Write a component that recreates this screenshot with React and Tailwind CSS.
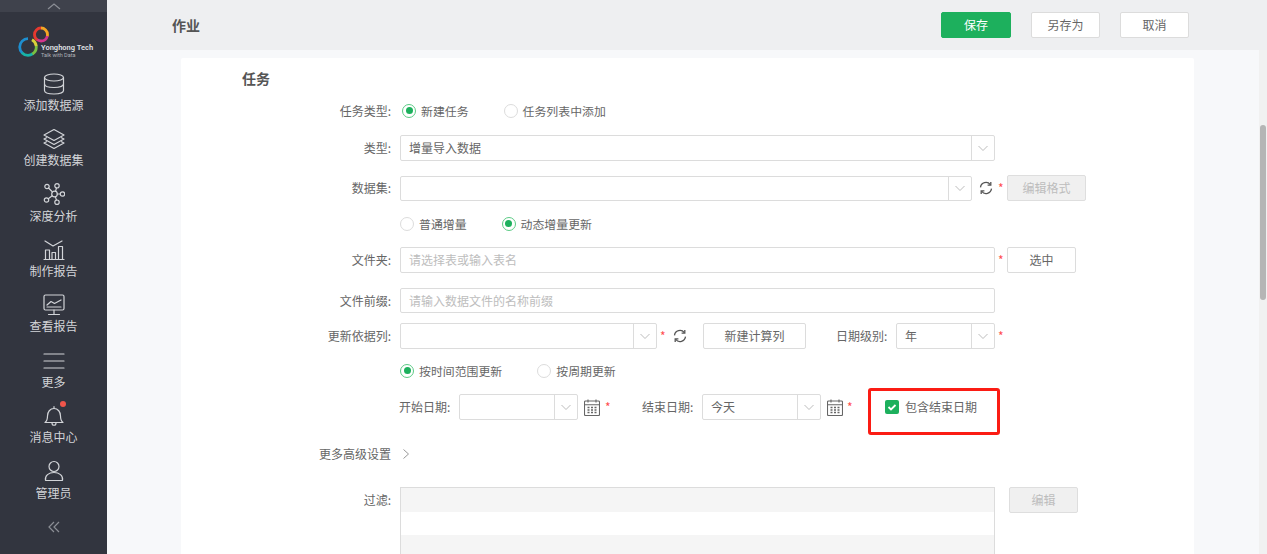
import React from "react";

const Star = ({ className = "" }) => (
  <span className={`text-[#ff4d4f] text-[12px] leading-none w-[6px] ${className}`}>*</span>
);

const Chevron = () => (
  <svg width="12" height="12" viewBox="0 0 12 12" fill="none" stroke="#bdbdbd" strokeWidth="1">
    <path d="M1.500 4l4.500 4.500L10.500 4" />
  </svg>
);

const Select = ({ w, h = "h-[26px]", value }) => (
  <div className={`${w} ${h} flex items-stretch shrink-0 bg-white border border-[#dcdcdc] rounded-[2px]`}>
    <div className="flex-1 flex items-center pl-[8px] text-[12px] text-[#666666]">{value}</div>
    <div className="w-[23px] border-l border-[#dcdcdc] flex items-center justify-center">
      <Chevron />
    </div>
  </div>
);

const Radio = ({ on, label, className = "" }) => (
  <div className={`flex items-center ${className}`}>
    <span className={`w-[14px] h-[14px] rounded-full border flex items-center justify-center bg-white ${on ? "border-[#5ccb85]" : "border-[#dcdcdc]"}`}>
      {on && <span className="w-[7px] h-[7px] rounded-full bg-[#1db05d]" />}
    </span>
    <span className="ml-[5px] text-[11.900px] text-[#666666] whitespace-nowrap">{label}</span>
  </div>
);

const Label = ({ children }) => (
  <div className="w-[210px] shrink-0 text-right text-[12px] text-[#666666] whitespace-nowrap">{children}</div>
);

const Refresh = ({ className = "" }) => (
  <svg className={className} width="14" height="14" viewBox="0 0 14 14" fill="none" stroke="#555555" strokeWidth="1.300">
    <path d="M1.500 6.300A5.500 5.500 0 0 1 11.300 3.600" />
    <path d="M12.500 7.700A5.500 5.500 0 0 1 2.700 10.400" />
    <path d="M11.800 1v3.200h-3.200" />
    <path d="M2.200 13V9.800h3.200" />
  </svg>
);

const Calendar = ({ className = "" }) => (
  <svg className={className} width="16" height="17" viewBox="0 0 16 17" fill="none" stroke="#666666" strokeWidth="1.100">
    <rect x="0.500" y="2" width="15" height="14.500" rx="1" />
    <path d="M0.500 5.700h15M4 0.500v3M12 0.500v3" />
    <path d="M3.500 8.500h2M7 8.500h2M10.500 8.500h2M3.500 11h2M7 11h2M10.500 11h2M3.500 13.500h2M7 13.500h2M10.500 13.500h2" strokeWidth="1.300" />
  </svg>
);

const Btn = ({ w, h = "h-[26px]", children, disabled, className = "" }) => (
  <div
    className={`${w} ${h} shrink-0 flex items-center justify-center text-[12px] rounded-[2px] border ${
      disabled ? "bg-[#f0f0f0] border-[#dedede] text-[#bdbdbd]" : "bg-white border-[#dcdcdc] text-[#666666]"
    } ${className}`}
  >
    {children}
  </div>
);

const Input = ({ w, h = "h-[26px]", placeholder }) => (
  <div className={`${w} ${h} shrink-0 flex items-center pl-[8px] bg-white border border-[#dcdcdc] rounded-[2px] text-[12px] text-[#bdbdbd]`}>
    {placeholder}
  </div>
);

const s = { fill: "none", stroke: "#d2d4d8", strokeWidth: 1.200, strokeLinecap: "round", strokeLinejoin: "round" };

const icons = {
  db: (
    <svg width="22" height="22" viewBox="0 0 22 22" {...s}>
      <ellipse cx="11" cy="4.500" rx="9.500" ry="3.500" />
      <path d="M1.500 4.500v13c0 2 4 3.500 9.500 3.500s9.500-1.500 9.500-3.500v-13" />
      <path d="M1.500 11c0 2 4 3.500 9.500 3.500s9.500-1.500 9.500-3.500" />
    </svg>
  ),
  layers: (
    <svg width="22" height="22" viewBox="0 0 22 22" {...s}>
      <path d="M11 1.500l10 5.500-10 5.500L1 7z" />
      <path d="M3.500 9.700L1 11l10 5.500L21 11l-2.500-1.300" />
      <path d="M3.500 13.700L1 15l10 5.500L21 15l-2.500-1.300" />
    </svg>
  ),
  nodes: (
    <svg width="22" height="22" viewBox="0 0 22 22" {...s}>
      <circle cx="11.500" cy="11" r="2.800" />
      <circle cx="4" cy="3.500" r="2.200" />
      <circle cx="14" cy="2.800" r="2.200" />
      <circle cx="19.500" cy="11" r="2.200" />
      <circle cx="3.500" cy="17" r="2.200" />
      <circle cx="14" cy="19.200" r="2.200" />
      <path d="M5.500 5l4 4M13.500 5l-1 3.300M14.300 11h3M9.200 12.800L5.300 15.700M12.300 13.700l1.200 3.300" />
    </svg>
  ),
  chart: (
    <svg width="22" height="22" viewBox="0 0 22 22" {...s}>
      <path d="M2 2l8 5 9-5" />
      <path d="M1 20.500h20" />
      <rect x="2.500" y="11" width="4" height="9.500" />
      <rect x="9" y="13.500" width="3.500" height="7" />
      <rect x="15.500" y="7.500" width="4" height="13" />
    </svg>
  ),
  monitor: (
    <svg width="22" height="22" viewBox="0 0 22 22" {...s}>
      <rect x="1" y="1" width="20" height="15" rx="1.500" />
      <path d="M4 11l4-3.500 3.500 2L18 6" />
      <path d="M4 13h14M11 16v4M5.500 20.500h11" />
    </svg>
  ),
  menu: (
    <svg width="22" height="22" viewBox="0 0 22 22" {...s}>
      <path d="M1 4h20M1 11h20M1 18h20" />
    </svg>
  ),
  bell: (
    <svg width="22" height="22" viewBox="0 0 22 22" {...s}>
      <path d="M2 17.500c2-1.500 2.500-3 2.500-6.500 0-4 2.500-7.500 6.500-7.500s6.500 3.500 6.500 7.500c0 3.500.5 5 2.500 6.500z" />
      <path d="M9 18c0 3 4 3 4 0M11 1.500v2" />
    </svg>
  ),
  user: (
    <svg width="22" height="22" viewBox="0 0 22 22" {...s}>
      <circle cx="11" cy="6.500" r="5" />
      <path d="M2.500 20.500c-1-5 3.500-8 8.500-8s9.500 3 8.500 8z" />
    </svg>
  ),
};

const navItems = [
  ["db", "添加数据源"],
  ["layers", "创建数据集"],
  ["nodes", "深度分析"],
  ["chart", "制作报告"],
  ["monitor", "查看报告"],
  ["menu", "更多"],
  ["bell", "消息中心"],
  ["user", "管理员"],
];

const Ring = ({ cx, cy, r, parts }) => (
  <g transform={`rotate(-90 ${cx} ${cy})`}>
    {parts.map(([color, start, len]) => (
      <circle
        key={color}
        cx={cx}
        cy={cy}
        r={r}
        stroke={color}
        pathLength="100"
        strokeDasharray={`${len} ${100 - len}`}
        strokeDashoffset={-start}
      />
    ))}
  </g>
);

const Logo = () => (
  <div className="flex items-end pl-[18px] h-[34px] mt-[14px]">
    <svg width="33" height="34" viewBox="0 0 33 34" fill="none" strokeWidth="2.800" className="shrink-0">
      <Ring
        cx={10}
        cy={21}
        r={8.300}
        parts={[
          ["#1e8fd0", 62, 38],
          ["#17b3a8", 40, 23],
          ["#7ac142", 22, 19],
          ["#d9d13a", 8, 15],
        ]}
      />
      <Ring
        cx={23}
        cy={8.500}
        r={6.500}
        parts={[
          ["#f5a623", 0, 30],
          ["#d2358d", 29, 32],
          ["#e5392f", 60, 40],
        ]}
      />
    </svg>
    <div className="ml-[-10px] flex flex-col leading-none" style={{ fontFamily: '"Roboto", sans-serif' }}>
      <span className="text-[7.500px] font-bold text-[#d8dade] whitespace-nowrap leading-[9px]">Yonghong Tech</span>
      <span className="text-[5.500px] text-[#aeb1b7] whitespace-nowrap leading-[7px] mb-[1px]">Talk with Data</span>
    </div>
  </div>
);

const Sidebar = () => (
  <aside className="w-[107px] shrink-0 h-full bg-[#32353f] flex flex-col items-stretch">
    <div className="h-[12px] bg-[#3f424c] flex items-center justify-center">
      <svg width="14" height="7" viewBox="0 0 14 7" fill="none" stroke="#8b8e95" strokeWidth="1.200">
        <path d="M1 6l6-5 6 5" />
      </svg>
    </div>
    <Logo />
    <div className="mt-[12.600px] flex flex-col">
      {navItems.map(([icon, label]) => (
        <div key={label} className="h-[55.400px] flex flex-col items-center relative">
          <div className="h-[22px] flex items-center justify-center">{icons[icon]}</div>
          <div className="mt-[1.200px] text-[12px] leading-[18px] text-[#d2d4d8] whitespace-nowrap">{label}</div>
          {icon === "bell" && (
            <span className="absolute left-[60px] top-[-4px] w-[6px] h-[6px] rounded-full bg-[#f0554b]" />
          )}
        </div>
      ))}
    </div>
    <div className="flex justify-center mt-[5.500px]">
      <svg width="12" height="12" viewBox="0 0 12 12" fill="none" stroke="#8b8e95" strokeWidth="1.200">
        <path d="M6 1L1 6l5 5M11 1L6 6l5 5" />
      </svg>
    </div>
  </aside>
);

export default function App() {
  return (
    <div
      className="w-[1267px] h-[554px] overflow-hidden flex bg-[#f7f8fa]"
      style={{ fontFamily: '"Noto Sans CJK SC", "Noto Sans", sans-serif' }}
    >
      <Sidebar />
      <div className="flex-1 min-w-0 h-full flex flex-col">
        <header className="h-[50px] shrink-0 bg-[#eeeff1] flex items-center pl-[65px]">
          <span className="text-[14px] font-bold text-[#555555] flex-1">作业</span>
          <Btn w="w-[70px]" className="!bg-[#1db05d] !border-[#1db05d] !text-white">保存</Btn>
          <Btn w="w-[69px]" className="ml-[20px]">另存为</Btn>
          <Btn w="w-[69px]" className="ml-[20px] mr-[78px]">取消</Btn>
        </header>
        <div className="flex-1 min-h-0 flex">
          <div className="flex-1 min-w-0 pl-[74px] pr-[65px] pt-[8px]">
            <main className="h-[600px] bg-white rounded-[2px] relative">
              <div className="pl-[61px] pt-[11px] text-[14px] font-bold text-[#555555] leading-[18px]">任务</div>

              <div className="mt-[14px] flex items-center h-[20px]">
                <Label>任务类型:</Label>
                <Radio on label="新建任务" className="ml-[11px]" />
                <Radio label="任务列表中添加" className="ml-[35px]" />
              </div>

              <div className="mt-[14px] flex items-center">
                <Label>类型:</Label>
                <div className="ml-[9px]"><Select w="w-[595px]" value="增量导入数据" /></div>
              </div>

              <div className="mt-[14px] flex items-center">
                <Label>数据集:</Label>
                <div className="ml-[9px]"><Select w="w-[572px]" h="h-[25px]" value="" /></div>
                <Refresh className="ml-[7px]" />
                <Star className="ml-[5px]" />
                <Btn w="w-[79px]" disabled className="ml-[3px]">编辑格式</Btn>
              </div>

              <div className="mt-[13px] flex items-center h-[20px]">
                <div className="w-[210px] shrink-0" />
                <Radio label="普通增量" className="ml-[9px]" />
                <Radio on label="动态增量更新" className="ml-[35px]" />
              </div>

              <div className="mt-[13px] flex items-center">
                <Label>文件夹:</Label>
                <div className="ml-[9px]"><Input w="w-[595px]" placeholder="请选择表或输入表名" /></div>
                <Star className="ml-[3px]" />
                <Btn w="w-[69px]" className="ml-[3px]">选中</Btn>
              </div>

              <div className="mt-[15px] flex items-center">
                <Label>文件前缀:</Label>
                <div className="ml-[9px]"><Input w="w-[595px]" h="h-[25px]" placeholder="请输入数据文件的名称前缀" /></div>
              </div>

              <div className="mt-[10px] flex items-center">
                <Label>更新依据列:</Label>
                <div className="ml-[9px]"><Select w="w-[257px]" value="" /></div>
                <Star className="ml-[3px]" />
                <Refresh className="ml-[7px]" />
                <Btn w="w-[103px]" className="ml-[16px]">新建计算列</Btn>
                <span className="ml-[30px] w-[50px] text-[12px] text-[#666666] whitespace-nowrap">日期级别:</span>
                <div className="ml-[10px]"><Select w="w-[99px]" value="年" /></div>
                <Star className="ml-[3px]" />
              </div>

              <div className="mt-[12px] flex items-center h-[20px]">
                <div className="w-[210px] shrink-0" />
                <Radio on label="按时间范围更新" className="ml-[9px]" />
                <Radio label="按周期更新" className="ml-[35px]" />
              </div>

              <div className="mt-[13px] flex items-center pl-[218px]">
                <span className="w-[50px] text-[12px] text-[#666666] whitespace-nowrap">开始日期:</span>
                <div className="ml-[10px]"><Select w="w-[119px]" value="" /></div>
                <Calendar className="ml-[6px]" />
                <Star className="ml-[5px]" />
                <span className="ml-[31px] w-[50px] text-[12px] text-[#666666] whitespace-nowrap">结束日期:</span>
                <div className="ml-[10px]"><Select w="w-[119px]" value="今天" /></div>
                <Calendar className="ml-[6px]" />
                <Star className="ml-[4px]" />
                <div className="ml-[32px] flex items-center">
                  <span className="w-[14px] h-[14px] rounded-[2px] bg-[#1db05d] flex items-center justify-center">
                    <svg width="10" height="10" viewBox="0 0 10 10" fill="none" stroke="#ffffff" strokeWidth="1.800">
                      <path d="M1.500 5l2.500 2.500 4.500-4.500" />
                    </svg>
                  </span>
                  <span className="ml-[6px] text-[12px] text-[#666666] whitespace-nowrap">包含结束日期</span>
                </div>
              </div>

              <div className="mt-[24px] flex items-center h-[20px]">
                <Label>更多高级设置</Label>
                <svg className="ml-[11px]" width="8" height="12" viewBox="0 0 8 12" fill="none" stroke="#999999" strokeWidth="1">
                  <path d="M1.500 1.500L6.500 6l-5 4.500" />
                </svg>
              </div>

              <div className="mt-[23px] flex items-start">
                <div className="w-[210px] shrink-0 h-[26px] flex items-center justify-end text-[12px] text-[#666666]">过滤:</div>
                <div className="ml-[9px] w-[595px] border border-[#dcdcdc] flex flex-col">
                  <div className="h-[24px] bg-[#f5f5f5]" />
                  <div className="h-[23px] bg-white" />
                  <div className="h-[24px] bg-[#f5f5f5]" />
                </div>
                <Btn w="w-[69px]" disabled className="ml-[14px]">编辑</Btn>
              </div>

              <div className="absolute left-[687px] top-[330px] w-[132px] h-[47px] border-[3px] border-[#fb1c14] rounded-[3px]" />
            </main>
          </div>
          <div className="w-[8px] shrink-0 bg-[#f1f1f1] pt-[75px] flex justify-center">
            <div className="w-[6px] h-[175px] bg-[#b5b5b5] rounded-[3px]" />
          </div>
        </div>
      </div>
    </div>
  );
}
